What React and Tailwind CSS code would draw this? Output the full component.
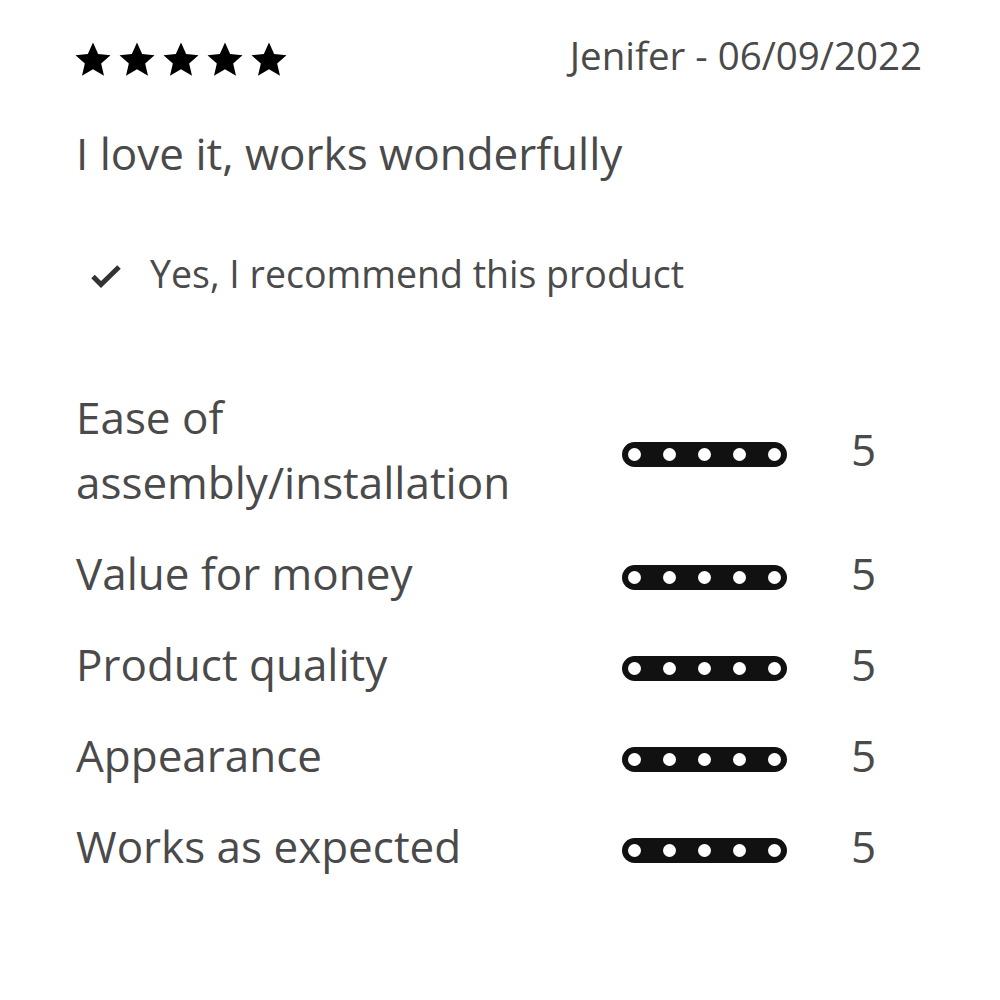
import React from 'react';

const RATINGS = [
  { label: 'Ease of assembly/installation', value: 5 },
  { label: 'Value for money', value: 5 },
  { label: 'Product quality', value: 5 },
  { label: 'Appearance', value: 5 },
  { label: 'Works as expected', value: 5 },
];

const Star = () => (
  <svg width="40" height="40" viewBox="0 0 24 24">
    <path d="M12 1.5l3.1 6.9 7.4.7-5.6 5 1.7 7.4L12 17.6l-6.6 3.9 1.7-7.4-5.6-5 7.4-.7z" fill="#000" />
  </svg>
);

const Bar = () => (
  <div className="w-[165px] h-[25px] rounded-full bg-[#111] flex items-center justify-between px-[6px]">
    {[0, 1, 2, 3, 4].map(i => (
      <div key={i} className="w-[13px] h-[13px] rounded-full bg-white" />
    ))}
  </div>
);

const App = () => {
  return (
    <div className="w-[1000px] h-[1000px] bg-white text-[#4a4a4a] pl-[76px] pr-[78px] pt-[35px]" style={{ fontFamily: '"Open Sans", sans-serif' }}>
      {/* Header */}
      <div className="flex items-start justify-between">
        <div className="flex gap-[4px] mt-[5px] -ml-[3px]">
          {[0, 1, 2, 3, 4].map(i => <Star key={i} />)}
        </div>
        <span className="text-[38.5px] leading-[40px]">Jenifer - 06/09/2022</span>
      </div>

      <p className="text-[44px] leading-[60px] mt-[43px]">I love it, works wonderfully</p>

      <div className="flex items-center gap-[28px] mt-[66px] pl-[14px]">
        <svg width="32" height="24" viewBox="0 0 32 24" className="mt-[4px]">
          <path d="M3 12.5l8 8L29 3" fill="none" stroke="#333" strokeWidth="5" />
        </svg>
        <span className="text-[37.5px] leading-[50px]">Yes, I recommend this product</span>
      </div>

      {/* Ratings */}
      <div className="flex flex-col gap-[26px] mt-[86px]">
        {RATINGS.map(r => (
          <div key={r.label} className="flex items-center">
            <div className="w-[546px] text-[44px] leading-[65px] pr-[70px]">{r.label}</div>
            <div className="flex items-center mt-[8px]">
              <Bar />
              <span className="ml-[64px] mb-[10px] text-[44px] leading-[44px]">{r.value}</span>
            </div>
          </div>
        ))}
      </div>
    </div>
  );
};

export default App;
